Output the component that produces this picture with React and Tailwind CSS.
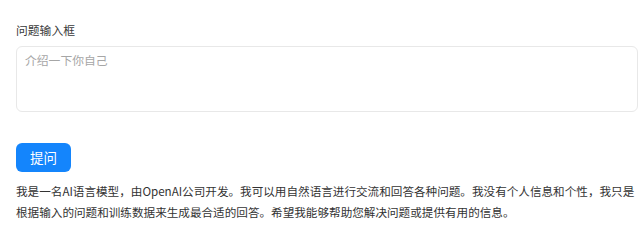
import React, { useState } from 'react';

const answer = '我是一名AI语言模型，由OpenAI公司开发。我可以用自然语言进行交流和回答各种问题。我没有个人信息和个性，我只是根据输入的问题和训练数据来生成最合适的回答。希望我能够帮助您解决问题或提供有用的信息。';

export default function App() {
  const [question, setQuestion] = useState('');

  return (
    <div className="min-h-screen bg-white pt-[20px] pl-4 pr-[2px]" style={{ fontFamily: '"Noto Sans CJK SC", "Noto Sans", sans-serif' }}>
      {/* 输入区域 */}
      <div className="text-[11.8px] leading-[20px] text-[#3a3a3a]">问题输入框</div>
      <textarea
        className="mt-[6px] block h-[66px] w-full resize-none rounded-[6px] border border-[#e8e8e8] px-2 pt-[3px] pb-1 text-[11.8px] leading-[20px] text-[#333] outline-none placeholder:text-[#a6a6a6]"
        placeholder="介绍一下你自己"
        value={question}
        onChange={(e) => setQuestion(e.target.value)}
      />

      <button className="mt-[31px] flex h-[29px] w-[55px] items-center justify-center rounded-[6px] bg-[#1485fc] text-[13.5px] text-white">
        提问
      </button>

      {/* 回答 */}
      <p className="mt-[9px] text-[11.6px] leading-[21px] text-[#333]">{answer}</p>
    </div>
  );
}
